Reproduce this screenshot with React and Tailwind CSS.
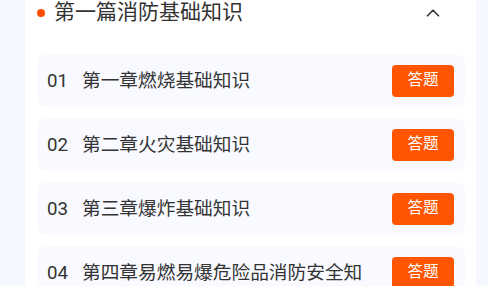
import { ChevronUp } from "lucide-react";

const chapters = [
  { no: "01", title: "第一章燃烧基础知识" },
  { no: "02", title: "第二章火灾基础知识" },
  { no: "03", title: "第三章爆炸基础知识" },
  { no: "04", title: "第四章易燃易爆危险品消防安全知识" },
];

export default function App() {
  return (
    <div
      className="h-[286px] w-[488px] overflow-hidden bg-[#f5f8ff] pl-[25px] pr-[12px]"
      style={{ fontFamily: 'Roboto, "Noto Sans CJK SC", sans-serif' }}
    >
      <div className="h-full bg-white pl-[12px] pr-[11px]">
        <div className="flex h-[25px] items-center">
          <span className="h-[8px] w-[8px] shrink-0 rounded-full bg-[#ff4d00]" />
          <span className="ml-[9px] text-[21px] leading-[25px] text-[#333]">第一篇消防基础知识</span>
          <ChevronUp size={22} strokeWidth={1.8} className="ml-auto mr-[21px] text-[#333]" />
        </div>

        <div className="mt-[29px] flex flex-col gap-[11px]">
          {chapters.map((c) => (
            <div
              key={c.no}
              className="flex h-[53px] items-center rounded-[10px] bg-[#f8faff] pl-[10px] pr-[11px]"
            >
              <span className="w-[35px] shrink-0 text-[18.7px] leading-[26px] text-[#333]">{c.no}</span>
              <span className="mr-[14px] h-[26px] flex-1 overflow-hidden break-all text-[18.7px] leading-[26px] text-[#333]">
                {c.title}
              </span>
              <button className="h-[32px] w-[62px] shrink-0 rounded-[4px] bg-[#ff5500] text-[15.5px] text-white">
                答题
              </button>
            </div>
          ))}
        </div>
      </div>
    </div>
  );
}
